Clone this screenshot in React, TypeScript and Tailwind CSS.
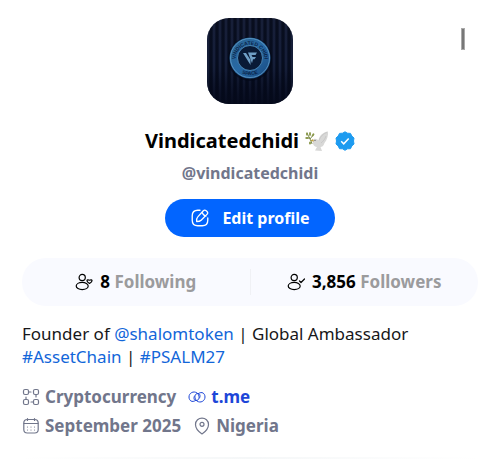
import type { ReactNode } from "react";

function Avatar() {
  return (
    <svg viewBox="0 0 86 86" className="size-[86px] rounded-[22px]" role="img" aria-label="Profile picture">
      <defs>
        <linearGradient id="cloth" x1="0" y1="0" x2="0" y2="1">
          <stop offset="0" stopColor="#0e1428" />
          <stop offset="0.5" stopColor="#0b1329" />
          <stop offset="1" stopColor="#050a1c" />
        </linearGradient>
        <pattern id="stripes" width="6" height="86" patternUnits="userSpaceOnUse">
          <rect width="2" height="86" fill="#26304f" opacity="0.4" />
          <rect x="3" width="2" height="86" fill="#01030c" opacity="0.35" />
        </pattern>
        <linearGradient id="fade" x1="0" y1="0" x2="0" y2="1">
          <stop offset="0.6" stopColor="#050a1c" stopOpacity="0" />
          <stop offset="1" stopColor="#050a1c" stopOpacity="0.9" />
        </linearGradient>
        <linearGradient id="ring" x1="0" y1="0" x2="1" y2="1">
          <stop offset="0" stopColor="#2a628f" />
          <stop offset="0.5" stopColor="#2869a4" />
          <stop offset="1" stopColor="#174980" />
        </linearGradient>
        <path id="upper" d="M29 45 A14.5 14.5 0 1 1 57 45" />
        <path id="lower" d="M26 45 A18 18 0 0 0 60 45" />
      </defs>
      <rect width="86" height="86" fill="url(#cloth)" />
      <rect width="86" height="86" fill="url(#stripes)" />
      <rect width="86" height="86" fill="url(#fade)" />
      <circle cx="43" cy="41" r="22" fill="#030817" opacity="0.6" />
      <circle cx="43" cy="40" r="20.5" fill="url(#ring)" />
      <circle cx="43" cy="40" r="19.5" fill="none" stroke="#6ba5cd" strokeWidth="0.7" />
      <circle cx="43" cy="40" r="12.500" fill="#091a36" stroke="#5597c8" strokeWidth="0.8" />
      <text fill="#0a2449" fontSize="5" fontWeight="700" fontFamily="Liberation Sans, sans-serif">
        <textPath href="#upper" startOffset="50%" textAnchor="middle">VINDICATED CHIDI</textPath>
      </text>
      <text fill="#0a2449" fontSize="5" fontWeight="700" fontFamily="Liberation Sans, sans-serif">
        <textPath href="#lower" startOffset="50%" textAnchor="middle">SPACE</textPath>
      </text>
      <path d="M36 35h3l4.500 7v5zM41 34.500h9l-1.500 2.500h-4l1 2h3.500l-1.500 2.300h-1.500l-1 4z" fill="#6f9fc6" />
    </svg>
  );
}

function Dove() {
  return (
    <svg viewBox="0 0 24 22" className="h-[22px] w-6" role="img" aria-label="Dove">
      <path d="M8 10.500C9 7.500 12 9 13.500 10.500C14 6 18 2 23 1.500C23.500 5 22 10 19.500 13C18.500 16 17 17 15.500 17L17 21L10 20.500L12 17C8.500 16.500 7 13 8 10.500Z" fill="#d8d8d7" />
      <path d="M14 10.500C15.500 6.500 18 3.500 22 2.500M16 13C18.500 11 20 9 21 6" stroke="#c2c2c2" strokeWidth="0.700" fill="none" />
      <path d="M8 9L5 11L9 11.500Z" fill="#c4a344" />
      <circle cx="10" cy="10.300" r="0.600" fill="#4c4c48" />
      <path d="M2 3L6 11L7 14M5 9L9 4M5 8L1 8" stroke="#71803c" strokeWidth="0.900" fill="none" />
      <g fill="#8a984b">
        <ellipse cx="2" cy="4" rx="1" ry="1.800" />
        <ellipse cx="5" cy="4" rx="1" ry="2" />
        <ellipse cx="8" cy="5" rx="1" ry="1.800" transform="rotate(35 8 5)" />
        <ellipse cx="2" cy="8" rx="1.800" ry="1" />
        <ellipse cx="5" cy="13" rx="1" ry="1.500" />
      </g>
    </svg>
  );
}

function Verified() {
  return (
    <svg viewBox="0 0 20 20" className="size-5" role="img" aria-label="Verified">
      <path d="M10 .8 12.500 2.200 15.500 2.400 16.800 5 19 7 18.500 10 19 13 16.800 15 15.500 17.700 12.500 17.800 10 19.300 7.500 17.800 4.500 17.700 3.200 15 1 13 1.500 10 1 7 3.200 5 4.500 2.400 7.500 2.200Z" fill="#1d9bf0" stroke="#1d9bf0" strokeWidth="1" strokeLinejoin="round" />
      <path d="m6.200 10.300 2.500 2.500 5-5.300" fill="none" stroke="white" strokeWidth="1.500" />
    </svg>
  );
}

function Icon({ children, className = "size-[18px]" }: { children: ReactNode; className?: string }) {
  return (
    <svg viewBox="0 0 18 18" className={`shrink-0 ${className}`} fill="none" stroke="currentColor" strokeWidth="1.200" strokeLinecap="round" strokeLinejoin="round" aria-hidden="true">
      {children}
    </svg>
  );
}

function Person({ children }: { children: ReactNode }) {
  return (
    <Icon>
      <circle cx="7.200" cy="4.500" r="3.100" />
      <ellipse cx="7.200" cy="13" rx="6" ry="3.600" />
      {children}
    </Icon>
  );
}

export default function App() {
  return (
    <main className="relative bg-white px-[22px] pt-[18px] font-['Noto_Sans',sans-serif] text-black">
      <button aria-label="Menu" className="absolute top-7 right-[35px] h-[22px] w-1 border border-[#aaa] bg-[#777]" />
      <header className="flex flex-col items-center">
        <Avatar />
        <div className="mt-[23px] flex items-center gap-1.5">
          <h1 className="text-xl leading-7 font-bold">Vindicatedchidi</h1>
          <Dove />
          <Verified />
        </div>
        <p className="mt-1 text-base leading-7 font-bold text-[#71768b]">@vindicatedchidi</p>
        <button className="mt-3 flex h-[38px] items-center gap-3 rounded-full bg-[#0265ff] px-[25px] text-base font-bold text-white">
          <Icon className="size-5">
            <path d="M9 2H7C3.500 2 2 3.500 2 7v4c0 3.500 1.500 5 5 5h4c3.500 0 5-1.500 5-5V9" />
            <path d="m7 8 5-5.500c1.500-1.500 5 1 3.500 3L10 11c-1 1-2 1.200-4 1.200C5.800 10.200 6 9 7 8Zm4-4c.5 2 1.500 3 3.300 3.300" />
          </Icon>
          Edit profile
        </button>
      </header>
      <section className="mt-[21px] flex h-12 items-center rounded-full bg-[#f9faff] text-[17px] font-bold">
        <a href="#following" className="flex flex-1 items-center justify-center gap-[7px]">
          <Person><path d="M14.500 10.500c-4-2.300-2.700-4.500 0-3.300 2.700-1.200 4 1 0 3.300Z" /></Person>
          <span>8 <span className="text-[#9b9b9d]">Following</span></span>
        </a>
        <span className="h-[26px] w-px bg-[#f0f1f5]" />
        <a href="#followers" className="flex flex-1 items-center justify-center gap-[7px]">
          <Person><path d="m12.500 8 1.500 1.500 3.500-3.500" /></Person>
          <span>3,856 <span className="text-[#9b9b9d]">Followers</span></span>
        </a>
      </section>
      <p className="mt-4 text-[17px] leading-[23px] text-[#171719]">
        Founder of <a href="#shalomtoken" className="text-[#1266d9]">@shalomtoken</a> | Global Ambassador<br />
        <a href="#AssetChain" className="text-[#1266d9]">#AssetChain</a> | <a href="#PSALM27" className="text-[#1266d9]">#PSALM27</a>
      </p>
      <section className="mt-3.5 text-[17px] leading-[29px] font-bold text-[#71768b]">
        <div className="flex items-center gap-3">
          <span className="flex items-center gap-[5px]">
            <Icon>
              <rect x="1.500" y="1.500" width="5" height="5" rx="1.500" />
              <rect x="11.500" y="1.500" width="5" height="5" rx="1.500" />
              <rect x="1.500" y="11.500" width="5" height="5" rx="1.500" />
              <rect x="11.500" y="11.500" width="5" height="5" rx="1.500" />
              <path d="M6.500 4H9M14 6.500V9M11.500 14H9M4 11.500V9" />
            </Icon>
            Cryptocurrency
          </span>
          <a href="#website" className="flex items-center gap-[5px] text-[#1d46d8]">
            <Icon>
              <g strokeWidth="1">
                <path d="M7.500 12.500C4 15 1 12.500 1 9c0-4 4.500-6.500 8-4 3 2.500 2.500 6.500 0 7.500-2.500.7-4-2-2.500-4.500" />
                <path d="M10.500 5.500C14 3 17 5.500 17 9c0 4-4.500 6.500-8 4-3-2.500-2.500-6.500 0-7.500 2.500-.7 4 2 2.500 4.500" />
              </g>
            </Icon>
            t.me
          </a>
        </div>
        <div className="flex items-center gap-3">
          <span className="flex items-center gap-[5px]">
            <Icon>
              <rect x="1.800" y="2.500" width="14.400" height="13.500" rx="3.500" />
              <path d="M2 6.500h14M5.500 1.500v2M12.500 1.500v2M5.500 10h.01M9 10h.01M12.500 10h.01M5.500 13h.01M9 13h.01M12.500 13h.01" />
            </Icon>
            September 2025
          </span>
          <span className="flex items-center gap-[5px]">
            <Icon>
              <path d="M9 17C6 15 2.500 11.500 2.500 7.500c0-8.500 13-8.500 13 0C15.500 11.500 12 15 9 17Z" />
              <circle cx="9" cy="7.300" r="2" />
            </Icon>
            Nigeria
          </span>
        </div>
      </section>
      <div className="mt-[17px] h-0.5 bg-linear-to-r from-transparent via-[#f5f7f8] to-transparent" />
    </main>
  );
}
